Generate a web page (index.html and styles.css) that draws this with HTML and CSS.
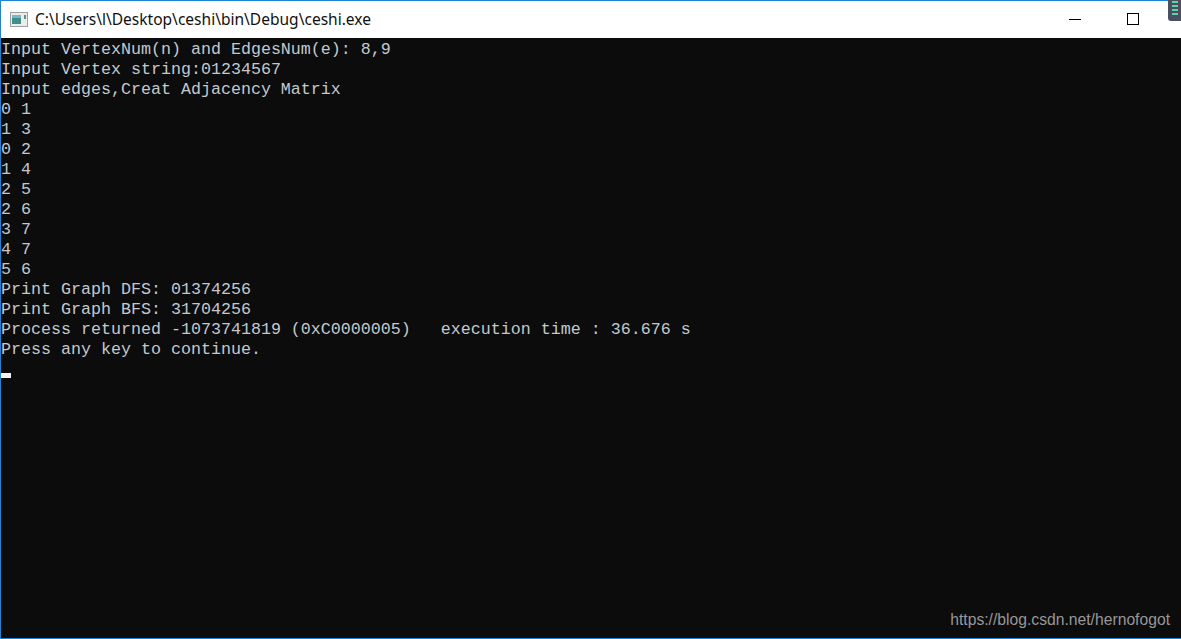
FILE: index.html
```html
<!DOCTYPE html>
<html lang="en">
<head>
<meta charset="utf-8">
<title>ceshi.exe</title>
<link rel="stylesheet" href="styles.css">
</head>
<body>
<div class="window">
  <header class="titlebar">
    <svg class="app-icon" width="18" height="15" viewBox="0 0 18 15">
      <rect x="0.5" y="0.5" width="17" height="14" fill="#ececec" stroke="#a0a0a0"/>
      <rect x="2" y="3" width="9" height="9" fill="#3f8f8a"/>
      <rect x="2" y="3" width="9" height="3" fill="#7fb3c8"/>
      <rect x="14" y="3" width="2" height="4" fill="#5f8f8a"/>
    </svg>
    <span class="title">C:\Users\l\Desktop\ceshi\bin\Debug\ceshi.exe</span>
    <span class="spacer"></span>
    <span class="minimize"></span>
    <span class="maximize"></span>
    <span class="tray-widget"><i></i><i></i><i></i><i></i></span>
  </header>
  <main class="console">
<pre class="output">Input VertexNum(n) and EdgesNum(e): 8,9
Input Vertex string:01234567
Input edges,Creat Adjacency Matrix
0 1
1 3
0 2
1 4
2 5
2 6
3 7
4 7
5 6
Print Graph DFS: 01374256
Print Graph BFS: 31704256
Process returned -1073741819 (0xC0000005)   execution time : 36.676 s
Press any key to continue.</pre>
    <div class="cursor"></div>
    <div class="watermark">https://blog.csdn.net/hernofogot</div>
  </main>
</div>
</body>
</html>
```
FILE: styles.css
```css
html, body {
  margin: 0;
  padding: 0;
  height: 100%;
  overflow: hidden;
}
.window {
  box-sizing: border-box;
  width: 1181px;
  height: 639px;
  display: flex;
  flex-direction: column;
  border: 1px solid #1a84d8;
  border-right: 0;
  background: #0c0c0c;
}
.titlebar {
  box-sizing: border-box;
  flex: 0 0 37px;
  display: flex;
  align-items: center;
  background: #fff;
  padding: 0 0 1px 9px;
  position: relative;
}
.app-icon {
  flex: none;
  margin-right: 7px;
}
.title {
  font: 15.54px "Noto Sans", "Liberation Sans", Arial, sans-serif;
  color: #111;
}
.spacer {
  flex: 1;
}
.minimize {
  width: 12px;
  height: 1px;
  background: #000;
  margin-right: 46px;
}
.maximize {
  box-sizing: border-box;
  width: 12px;
  height: 12px;
  border: 1px solid #000;
  margin-right: 42px;
}
.tray-widget {
  position: absolute;
  top: -1px;
  right: 0;
  width: 13px;
  height: 21px;
  background: #4a5060;
  border-bottom-left-radius: 3px;
  display: flex;
  flex-direction: column;
  align-items: center;
  gap: 2px;
  padding-top: 1px;
  box-sizing: border-box;
}
.tray-widget i {
  width: 6px;
  height: 2px;
  background: #5fd0a8;
}
.console {
  flex: 1;
  position: relative;
  padding-top: 2px;
  background: #0c0c0c;
  color: #c4c8cc;
}
.output {
  margin: 0;
  font: 16.67px/20px "Liberation Mono", "Courier New", monospace;
}
.cursor {
  width: 10px;
  height: 5px;
  margin-top: 13px;
  background: #f2f2f2;
}
.watermark {
  position: absolute;
  right: 11px;
  bottom: 9px;
  font: 15.7px "Liberation Sans", Arial, sans-serif;
  color: #979797;
}
```
